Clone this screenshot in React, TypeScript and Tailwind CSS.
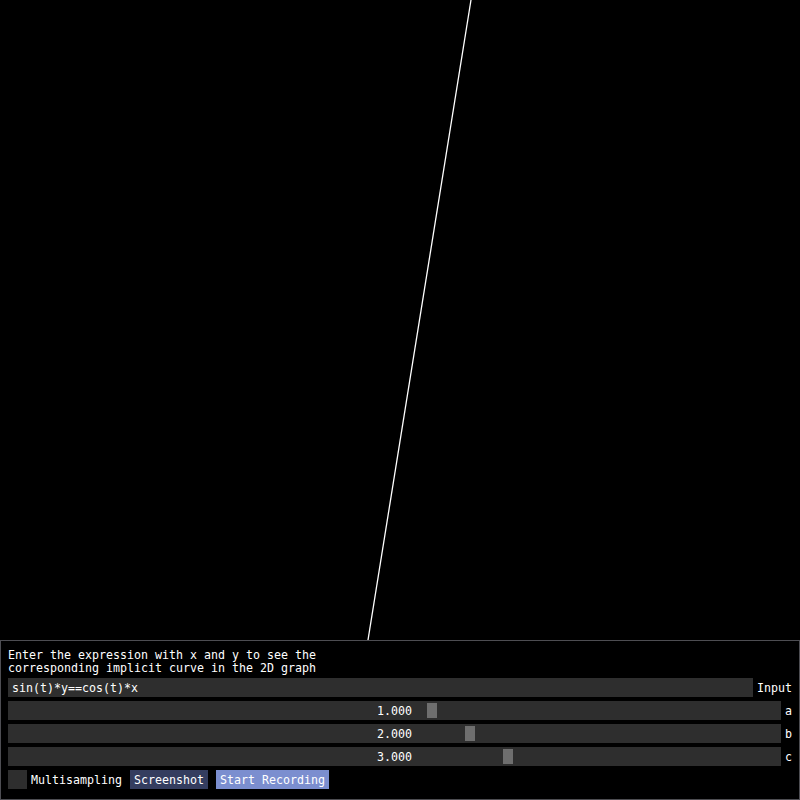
import React from "react";

const FONT = { fontFamily: '"DejaVu Sans Mono", "Liberation Mono", monospace' };

const sliders = [
  { v: 1, label: "a" },
  { v: 2, label: "b" },
  { v: 3, label: "c" },
];

function Slider({ v, label }: { v: number; label: string }) {
  const t = (v + 10) / 20;
  const left = 2 + t * 759;
  return (
    <div className="flex items-center h-[19px]">
      <div className="relative w-[773px] h-[19px] bg-[#2e2e2e] flex items-center justify-center">
        <div
          className="absolute top-[2px] w-[10px] h-[15px] bg-[#6e6e6e]"
          style={{ left: `${left}px` }}
        />
        <span className="relative leading-[13px] pt-[2px]">{v.toFixed(3)}</span>
      </div>
      <span className="ml-[4px] leading-[13px] pt-[2px]">{label}</span>
    </div>
  );
}

export default function App() {
  return (
    <div
      className="w-[800px] h-[800px] bg-black text-white flex flex-col overflow-hidden text-[11.63px]"
      style={FONT}
    >
      <div className="h-[640px] w-full">
        <svg width="800" height="640" viewBox="0 0 800 640">
          <line x1="471" y1="0" x2="368" y2="640" stroke="white" strokeWidth="1.3" />
        </svg>
      </div>
      <div className="h-[160px] border border-[#4d4d52] px-[7px] pt-[7px] flex flex-col gap-[4px]">
        <div className="h-[26px] pt-[1px] leading-[13px] whitespace-pre">
          <div>Enter the expression with x and y to see the</div>
          <div>corresponding implicit curve in the 2D graph</div>
        </div>
        <div className="flex items-center h-[19px]">
          <div className="w-[745px] h-[19px] bg-[#2e2e2e] flex items-center px-[4px]">
            <span className="leading-[13px] pt-[2px]">sin(t)*y==cos(t)*x</span>
          </div>
          <span className="ml-[4px] leading-[13px] pt-[2px]">Input</span>
        </div>
        {sliders.map((s) => (
          <Slider key={s.label} v={s.v} label={s.label} />
        ))}
        <div className="flex items-center h-[19px]">
          <div className="w-[19px] h-[19px] bg-[#2e2e2e]" />
          <span className="ml-[4px] leading-[13px] pt-[2px]">Multisampling</span>
          <div className="ml-[8px] h-[19px] px-[4px] flex items-center bg-[#343d5f]">
            <span className="leading-[13px] pt-[2px]">Screenshot</span>
          </div>
          <div className="ml-[8px] h-[19px] px-[4px] flex items-center bg-[#7b8ecf]">
            <span className="leading-[13px] pt-[2px]">Start Recording</span>
          </div>
        </div>
      </div>
    </div>
  );
}
